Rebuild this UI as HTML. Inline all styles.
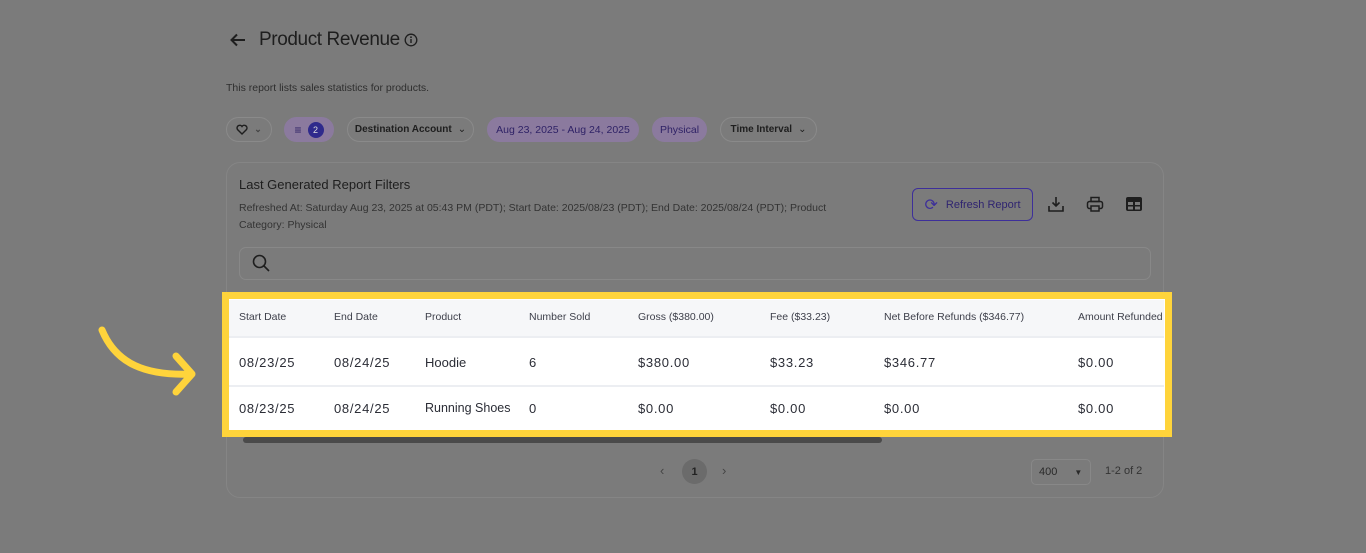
<!DOCTYPE html>
<html><head><style>
*{margin:0;padding:0;box-sizing:border-box}
body{width:1366px;height:553px;background:#7b7b7b;font-family:"Liberation Sans",sans-serif;position:relative;overflow:hidden;color:#1e1e1e}
.a{position:absolute}
.pill{position:absolute;top:117px;height:25px;border:1px solid #8a8a8a;border-radius:13px;font-size:10px;font-weight:bold;color:#1e1e1e;display:flex;align-items:center;justify-content:center;gap:6px}
.pur{background:#8b7a9e;border-color:#8b7a9e;color:#2f2266;font-weight:normal}
.card{left:226px;top:162px;width:938px;height:336px;border:1px solid #858585;border-radius:14px}
.th{font-size:10.5px;color:#3d3f4a;top:311px}
.td{font-size:13px;color:#2b2d36;letter-spacing:.7px}
</style></head><body>
<svg class="a" style="left:229px;top:31px" width="18" height="18" viewBox="0 0 18 18"><path d="M16 9H3M8 3.5L2.5 9 8 14.5" stroke="#1e1e1e" stroke-width="2" fill="none"/></svg>
<div class="a" style="left:259px;top:29px;font-size:19px;color:#1e1e1e;letter-spacing:-.4px">Product Revenue</div>
<svg class="a" style="left:404px;top:33px" width="14" height="14"><circle cx="7" cy="7" r="5.8" stroke="#1e1e1e" stroke-width="1.3" fill="none"/><path d="M7 6v4" stroke="#1e1e1e" stroke-width="1.4"/><circle cx="7" cy="4.2" r=".9" fill="#1e1e1e"/></svg>
<div class="a" style="left:226px;top:82px;font-size:10.5px;color:#2e2e2e">This report lists sales statistics for products.</div>
<div class="pill" style="left:226px;width:46px"><svg width="12" height="11"><path d="M6 10L1.5 5.5A2.5 2.5 0 0 1 6 2.5 2.5 2.5 0 0 1 10.5 5.5Z" stroke="#1e1e1e" stroke-width="1.4" fill="none"/></svg><span style="font-size:9px;color:#444">&#8964;</span></div>
<div class="pill pur" style="left:284px;width:50px"><span style="font-size:12px">&#8801;</span><span style="background:#2f2a8c;color:#ddd;border-radius:50%;width:16px;height:16px;font-size:9px;display:flex;align-items:center;justify-content:center">2</span></div>
<div class="pill" style="left:347px;width:127px">Destination Account <span style="font-weight:normal">&#8964;</span></div>
<div class="pill pur" style="left:487px;width:152px;font-size:10.5px">Aug 23, 2025 - Aug 24, 2025</div>
<div class="pill pur" style="left:652px;width:55px;font-size:10.5px">Physical</div>
<div class="pill" style="left:720px;width:97px">Time Interval <span style="font-weight:normal">&#8964;</span></div>
<div class="a card"></div>
<div class="a" style="left:239px;top:177px;font-size:13px;color:#1e1e1e">Last Generated Report Filters</div>
<div class="a" style="left:239px;top:200px;font-size:10.5px;color:#333;line-height:17px;width:628px">Refreshed At: Saturday Aug 23, 2025 at 05:43 PM (PDT); Start Date: 2025/08/23 (PDT); End Date: 2025/08/24 (PDT); Product Category: Physical</div>
<div class="a" style="left:912px;top:188px;width:121px;height:33px;border:1.5px solid #3d2f9a;border-radius:6px;font-size:11px;color:#2f2470;display:flex;align-items:center;justify-content:center;gap:8px"><span style="font-size:16px;color:#3d2f9a">&#10227;</span>Refresh Report</div>
<svg class="a" style="left:1047px;top:195px" width="18" height="18"><path d="M9 2v9M5.5 7.5 9 11l3.5-3.5M2 11v5h14v-5" stroke="#1e1e1e" stroke-width="1.6" fill="none"/></svg>
<svg class="a" style="left:1086px;top:196px" width="18" height="17"><rect x="5" y="1.5" width="8" height="4" stroke="#1e1e1e" stroke-width="1.5" fill="none"/><rect x="1.5" y="5.5" width="15" height="7" rx="2" stroke="#1e1e1e" stroke-width="1.5" fill="none"/><rect x="5" y="10" width="8" height="5" stroke="#1e1e1e" stroke-width="1.5" fill="#7b7b7b"/></svg>
<svg class="a" style="left:1125px;top:196px" width="18" height="16"><rect x="1" y="1" width="16" height="14" rx="2" fill="#1e1e1e"/><rect x="3" y="6" width="5" height="3" fill="#7b7b7b"/><rect x="10" y="6" width="5" height="3" fill="#7b7b7b"/><rect x="3" y="10.5" width="5" height="3" fill="#7b7b7b"/><rect x="10" y="10.5" width="5" height="3" fill="#7b7b7b"/></svg>
<div class="a" style="left:239px;top:247px;width:912px;height:33px;border:1px solid #888;border-radius:7px"></div>
<svg class="a" style="left:252px;top:254px" width="18" height="18"><circle cx="7.5" cy="7.5" r="6" stroke="#1e1e1e" stroke-width="1.6" fill="none"/><path d="M12 12l5 5" stroke="#1e1e1e" stroke-width="1.6"/></svg>
<div class="a" style="left:229px;top:437px;width:935px;height:6px;"><div class="a" style="left:14px;top:0;width:639px;height:6px;background:#4a4a4a;border-radius:3px"></div></div>
<div class="a" style="left:222px;top:292px;width:950px;height:145px;border:7px solid #ffd43b;background:#fff"></div>
<div class="a" style="left:229px;top:300px;width:935px;height:38px;background:#f6f7f9;border-bottom:2px solid #eceef2"></div>
<div class="a" style="left:229px;top:385px;width:935px;height:2px;background:#eceef2"></div>
<div class="a th" style="left:239px">Start Date</div><div class="a th" style="left:334px">End Date</div><div class="a th" style="left:425px">Product</div><div class="a th" style="left:529px">Number Sold</div><div class="a th" style="left:638px">Gross ($380.00)</div><div class="a th" style="left:770px">Fee ($33.23)</div><div class="a th" style="left:884px">Net Before Refunds ($346.77)</div><div class="a th" style="left:1078px">Amount Refunded</div>
<div class="a td" style="left:239px;top:355px">08/23/25</div><div class="a td" style="left:334px;top:355px">08/24/25</div><div class="a td" style="left:425px;top:355px;letter-spacing:0">Hoodie</div><div class="a td" style="left:529px;top:355px">6</div><div class="a td" style="left:638px;top:355px">$380.00</div><div class="a td" style="left:770px;top:355px">$33.23</div><div class="a td" style="left:884px;top:355px">$346.77</div><div class="a td" style="left:1078px;top:355px">$0.00</div>
<div class="a td" style="left:239px;top:401px">08/23/25</div><div class="a td" style="left:334px;top:401px">08/24/25</div><div class="a td" style="left:425px;top:401px;letter-spacing:0;font-size:12.5px">Running Shoes</div><div class="a td" style="left:529px;top:401px">0</div><div class="a td" style="left:638px;top:401px">$0.00</div><div class="a td" style="left:770px;top:401px">$0.00</div><div class="a td" style="left:884px;top:401px">$0.00</div><div class="a td" style="left:1078px;top:401px">$0.00</div>
<svg class="a" style="left:96px;top:324px" width="104" height="72"><path d="M6 6C20 40 50 52 96 50M80 32L96 50 80 68" stroke="#ffd43b" stroke-width="7" stroke-linecap="round" stroke-linejoin="round" fill="none"/></svg>
<div class="a" style="left:660px;top:463px;font-size:13px;color:#444">&#8249;</div>
<div class="a" style="left:682px;top:459px;width:25px;height:25px;border-radius:50%;background:#6b6b6b;font-size:11px;font-weight:bold;color:#222;display:flex;align-items:center;justify-content:center">1</div>
<div class="a" style="left:722px;top:463px;font-size:13px;color:#444">&#8250;</div>
<div class="a" style="left:1031px;top:459px;width:60px;height:26px;border:1px solid #888;border-radius:5px;font-size:11px;color:#2a2a2a;padding:6px 0 0 7px">400 <span style="margin-left:14px;font-size:8px">&#9660;</span></div>
<div class="a" style="left:1105px;top:465px;font-size:11px;color:#333">1-2 of 2</div>
</body></html>
